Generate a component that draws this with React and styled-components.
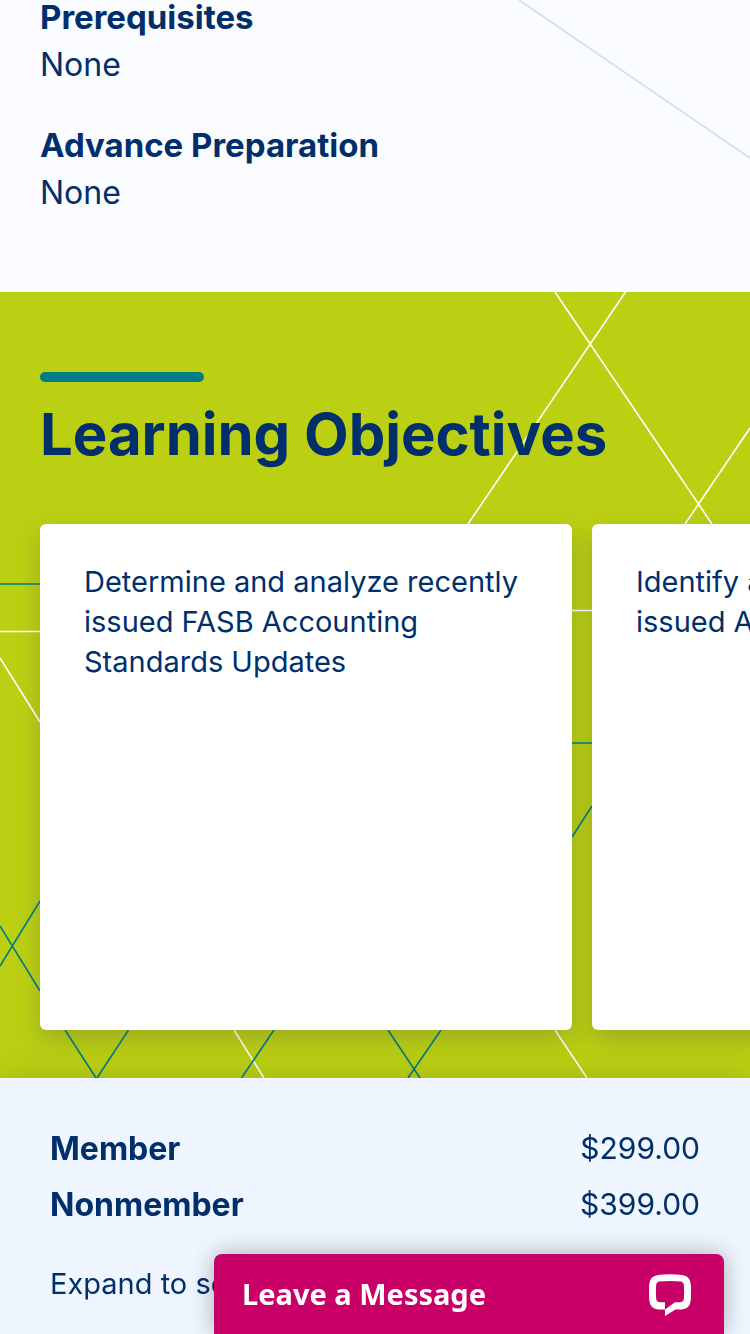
import React from 'react';
import styled, { createGlobalStyle } from 'styled-components';

const navy = '#002f6c';
const teal = '#007c89';

const GlobalStyle = createGlobalStyle`
  *, *::before, *::after { box-sizing: border-box; }
  html { background: #fbfcff; }
  body {
    margin: 0;
    overflow-x: hidden;
    color: ${navy};
    font-family: Inter, "Liberation Sans", sans-serif;
  }
`;

const Page = styled.div`
  position: relative;
  overflow: hidden;
  padding-bottom: 256px;
`;

const Details = styled.section`
  position: relative;
  padding: 0 40px 76px;
`;

const DetailList = styled.dl`
  display: flex;
  flex-direction: column;
  gap: 40px;
  margin: 0;
`;

const DetailTerm = styled.dt`
  font-size: 33px;
  font-weight: 700;
  line-height: 34px;
`;

const DetailValue = styled.dd`
  margin: 8px 0 0;
  font-size: 32px;
  line-height: 46px;
`;

const Backdrop = styled.svg`
  position: absolute;
  top: 0;
  left: 0;
  width: 750px;
  height: 100%;
  pointer-events: none;
`;

const Objectives = styled.section`
  position: relative;
  overflow: hidden;
  padding: 80px 0 48px;
  background: #bbd013;
`;

const Heading = styled.header`
  position: relative;
  padding: 0 40px;
`;

const Accent = styled.div`
  width: 164px;
  height: 10px;
  border-radius: 5px;
  background: ${teal};
`;

const Title = styled.h2`
  margin: 16px 0 54px;
  font-size: 58px;
  font-weight: 700;
  line-height: 72px;
`;

const CardRow = styled.ul`
  position: relative;
  display: flex;
  gap: 20px;
  margin: 0;
  padding: 0 40px;
  list-style: none;
`;

const Card = styled.li`
  flex: 0 0 532px;
  min-height: 506px;
  padding: 38px 44px;
  border-radius: 6px;
  background: #fff;
  box-shadow: 0 10px 24px rgba(51, 51, 71, 0.22);
  font-size: 29px;
  line-height: 40px;
`;

const PriceBar = styled.aside`
  position: fixed;
  right: 0;
  bottom: 0;
  left: 0;
  height: 256px;
  padding: 42px 50px 0;
  background: #eff6ff;
  box-shadow: 0 0 30px rgba(0, 0, 0, 0.15);
`;

const PriceList = styled.dl`
  margin: 0;
`;

const PriceRow = styled.div`
  display: flex;
  align-items: center;
  justify-content: space-between;
  height: 56px;
`;

const PriceLabel = styled.dt`
  font-size: 32px;
  font-weight: 700;
`;

const Price = styled.dd`
  margin: 0;
  font-size: 30px;
`;

const ExpandButton = styled.button`
  display: block;
  margin-top: 32px;
  padding: 0;
  border: 0;
  background: none;
  color: inherit;
  font: inherit;
  font-size: 29px;
  line-height: 40px;
`;

const ChatButton = styled.button`
  position: fixed;
  right: 26px;
  bottom: 0;
  display: flex;
  align-items: center;
  justify-content: space-between;
  width: 510px;
  height: 80px;
  padding: 0 32px 0 28px;
  border: 0;
  border-radius: 8px 8px 0 0;
  background: #c90068;
  box-shadow: 0 0 24px rgba(0, 0, 0, 0.3);
  color: #fff;
  font-family: "Noto Sans", sans-serif;
  font-size: 29px;
  font-weight: 700;
  line-height: 36px;
`;

const details = [
  ['Prerequisites', 'None'],
  ['Advance Preparation', 'None'],
];

const objectives = [
  'Determine and analyze recently issued FASB Accounting Standards Updates',
  'Identify and analyze recently issued AICPA standards',
];

const prices = [
  ['Member', '$299.00'],
  ['Nonmember', '$399.00'],
];

function ChatIcon() {
  return (
    <svg width="44" height="44" viewBox="0 0 44 44" aria-hidden="true">
      <path
        fill="#fff"
        fillRule="evenodd"
        d="M10 3Q22 1.600 34 3Q42 4 42.800 12Q43.200 19 42.800 28Q42 36.800 34 37.400H27.500L17 44V37.500L10 37.400Q2 36.800 1.200 28Q.8 19 1.200 12Q2 4 10 3ZM11 9.600Q8.600 9.900 8.200 12.500Q7.600 19 8.200 27Q8.500 30 12 30.300H17V37.500L27 30.300H32Q35.500 30 35.800 27Q36.400 19 35.800 12.500Q35.400 9.900 33 9.600Q22 8.400 11 9.600Z"
      />
    </svg>
  );
}

export default function App() {
  return (
    <>
      <GlobalStyle />
      <Page>
        <Details>
          <Backdrop aria-hidden="true">
            <path d="M519 0L750 158" stroke="#cbe4e9" strokeWidth="1.8" />
          </Backdrop>
          <DetailList>
            {details.map(([term, value]) => (
              <div key={term}>
                <DetailTerm>{term}</DetailTerm>
                <DetailValue>{value}</DetailValue>
              </div>
            ))}
          </DetailList>
        </Details>

        <Objectives>
          <Backdrop aria-hidden="true" fill="none" strokeWidth="1.6">
            <path
              stroke="#fff"
              d="M555 0L712 232M625.500 0L468 232M750 136L685 232M0 339.500H40M572 318.500H592M0 366L40 430M234 738L264 786M555 738L587 786"
            />
            <path
              stroke={teal}
              d="M0 292H40M572 451H592M592 514L572 545M40 609L0 674M0 634L40 699M65 738L96 786M128.500 738L97 786M274 738L241.500 786M388 738L420 786M441 738L408 786"
            />
          </Backdrop>
          <Heading>
            <Accent />
            <Title>Learning Objectives</Title>
          </Heading>
          <CardRow>
            {objectives.map((text) => (
              <Card key={text}>{text}</Card>
            ))}
          </CardRow>
        </Objectives>
      </Page>

      <PriceBar>
        <PriceList>
          {prices.map(([label, amount]) => (
            <PriceRow key={label}>
              <PriceLabel>{label}</PriceLabel>
              <Price>{amount}</Price>
            </PriceRow>
          ))}
        </PriceList>
        <ExpandButton type="button">Expand to see more</ExpandButton>
      </PriceBar>

      <ChatButton type="button">
        Leave a Message
        <ChatIcon />
      </ChatButton>
    </>
  );
}
